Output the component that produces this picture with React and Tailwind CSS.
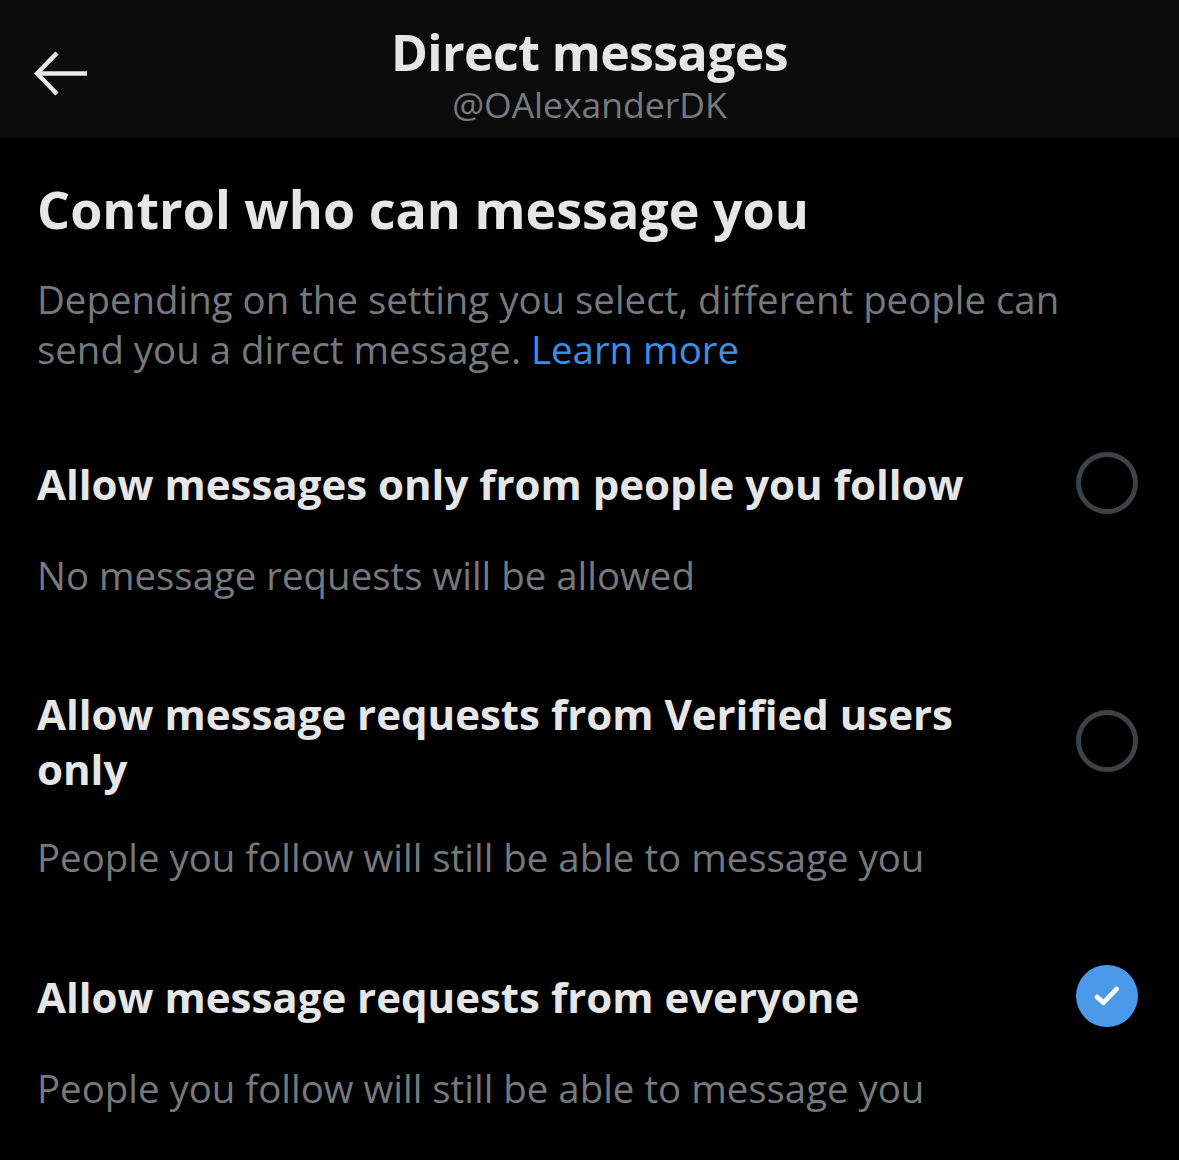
const options = [
  {
    title: "Allow messages only from people you follow",
    sub: "No message requests will be allowed",
    checked: false,
    gap: "mt-[78px]",
  },
  {
    title: "Allow message requests from Verified users only",
    sub: "People you follow will still be able to message you",
    checked: false,
    gap: "mt-[86px]",
  },
  {
    title: "Allow message requests from everyone",
    sub: "People you follow will still be able to message you",
    checked: true,
    gap: "mt-[83px]",
  },
];

function Radio({ checked }) {
  if (checked) {
    return (
      <div className="w-[62px] h-[62px] rounded-full bg-[#4b99e9] flex items-center justify-center shrink-0">
        <svg width="32" height="32" viewBox="0 0 24 24" fill="none">
          <path
            d="M4.5 12.8l4.8 4.2 9.8-10.2"
            stroke="#ffffff"
            strokeWidth="3.6"
            strokeLinecap="round"
            strokeLinejoin="round"
          />
        </svg>
      </div>
    );
  }
  return (
    <div className="w-[62px] h-[62px] rounded-full border-[5px] border-[#3e4245] shrink-0" />
  );
}

export default function App() {
  return (
    <div
      className="w-[1179px] min-h-[1160px] bg-black text-[#e6e6e6]"
      style={{ fontFamily: '"Open Sans", sans-serif' }}
    >
      {/* header */}
      <div className="h-[138px] bg-[#0b0b0b] relative">
        <svg
          className="absolute left-[33px] top-[50px]"
          width="56"
          height="47"
          viewBox="0 0 56 47"
          fill="none"
          stroke="#e9e9e9"
          strokeWidth="4.5"
        >
          <path d="M54 23.5H5" />
          <path d="M24 3L4 23.5 24 44" />
        </svg>
        <div className="flex flex-col items-center pt-[23px]">
          <div className="text-[50px] leading-[58px] font-bold tracking-[-0.6px]">
            Direct messages
          </div>
          <div className="text-[35.5px] leading-[46px] text-[#777b80]">
            @OAlexanderDK
          </div>
        </div>
      </div>

      <div className="pl-[37px] pr-[41px] pt-[39px]">
        <h1 className="text-[52px] leading-[64px] font-bold">
          Control who can message you
        </h1>
        <p className="mt-[33px] text-[38.4px] leading-[50px] text-[#75797e] w-[1070px]">
          Depending on the setting you select, different people can send you a
          direct message. <span className="text-[#3c8fe6]">Learn more</span>
        </p>

        {options.map((o, i) => (
          <div key={i} className={o.gap}>
            <div className="flex items-center justify-between">
              <div className="text-[42px] leading-[55px] font-bold w-[980px]">
                {o.title}
              </div>
              <Radio checked={o.checked} />
            </div>
            <div className="mt-[36px] text-[38.4px] leading-[50px] text-[#75797e]">
              {o.sub}
            </div>
          </div>
        ))}
      </div>
    </div>
  );
}
